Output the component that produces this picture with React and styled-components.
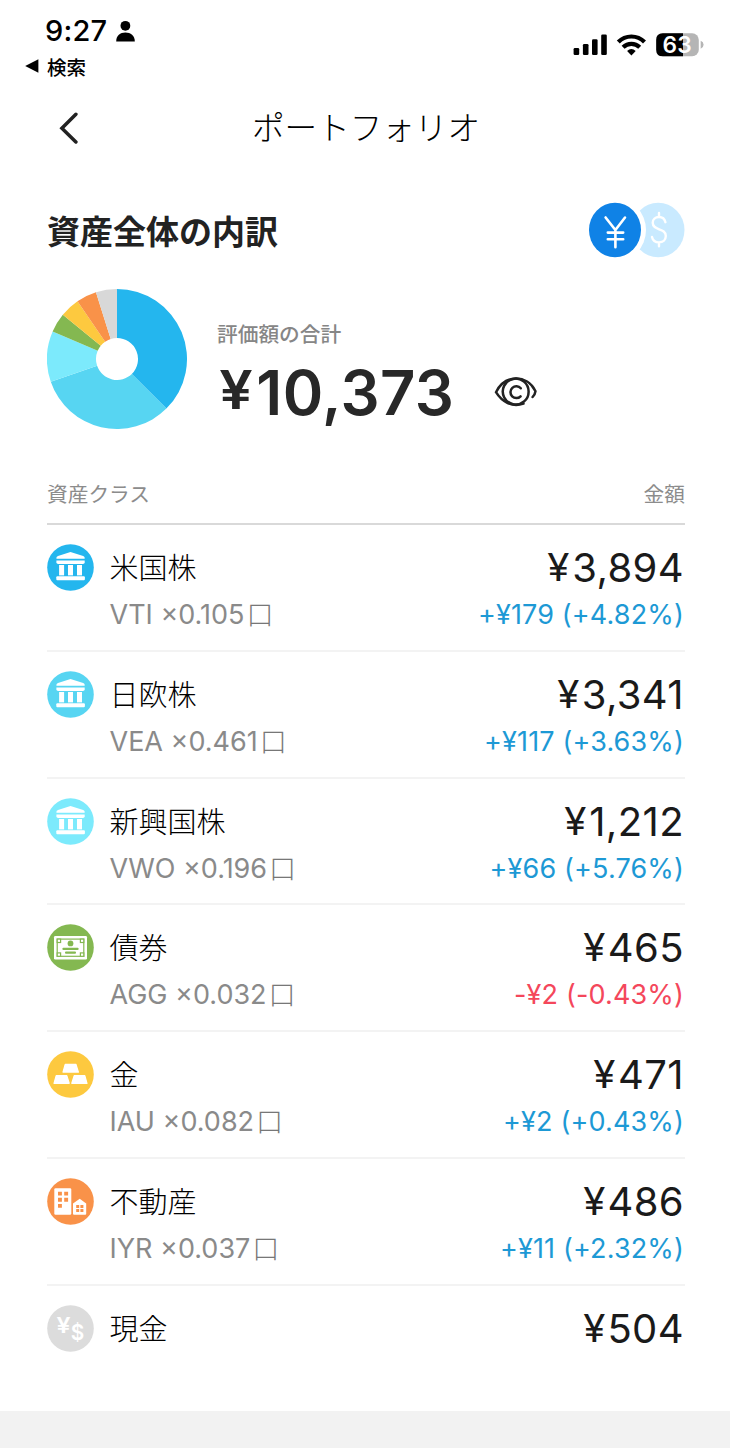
import styled, { createGlobalStyle } from 'styled-components';

const latin = `Inter, 'Noto Sans CJK JP', sans-serif`;
const japanese = `'Noto Sans CJK JP', sans-serif`;

const assets = [
  { name: '米国株', sub: 'VTI ×0.105', amount: 3894, diff: '+¥179 (+4.82%)', color: '#24b6ee', icon: 'bank' },
  { name: '日欧株', sub: 'VEA ×0.461', amount: 3341, diff: '+¥117 (+3.63%)', color: '#57d5f2', icon: 'bank' },
  { name: '新興国株', sub: 'VWO ×0.196', amount: 1212, diff: '+¥66 (+5.76%)', color: '#7ceafc', icon: 'bank' },
  { name: '債券', sub: 'AGG ×0.032', amount: 465, diff: '-¥2 (-0.43%)', color: '#84b851', icon: 'bond' },
  { name: '金', sub: 'IAU ×0.082', amount: 471, diff: '+¥2 (+0.43%)', color: '#fdc93f', icon: 'gold' },
  { name: '不動産', sub: 'IYR ×0.037', amount: 486, diff: '+¥11 (+2.32%)', color: '#f99249', icon: 'estate' },
  { name: '現金', amount: 504, color: '#dcdcdc', icon: 'cash' },
];

const total = assets.reduce((sum, a) => sum + a.amount, 0);

// Point on a circle, angle counted clockwise from the top
const point = (r, ratio) => {
  const a = ratio * Math.PI * 2;
  return `${70 + r * Math.sin(a)} ${70 - r * Math.cos(a)}`;
};

const Donut = () => {
  let start = 0;
  return (
    <Chart viewBox="0 0 140 140">
      {assets.map((a) => {
        const from = start;
        const to = start + a.amount / total;
        start = to;
        return (
          <path
            key={a.name}
            fill={a.icon === 'cash' ? '#d8d8d8' : a.color}
            d={`M${point(21, from)} L${point(70, from)} A70 70 0 0 1 ${point(70, to)} L${point(21, to)} A21 21 0 0 0 ${point(21, from)}Z`}
          />
        );
      })}
    </Chart>
  );
};

const Glyph = ({ type, color }) => (
  <RowIcon viewBox="0 0 47 47">
    <circle cx="23.5" cy="23.5" r="23.3" fill={color} />
    {type === 'bank' && (
      <g fill="#fff">
        <path d="M9.4 14.8Q9 12.6 11 12L23.5 8L36.2 12Q38.1 12.6 37.7 14.8Z" />
        <path d="M9.4 16.6h28.3v1.7q0 1.8-1.8 1.8H11.2q-1.8 0-1.8-1.8Z" />
        <rect x="12.1" y="21" width="5" height="10.4" />
        <rect x="21" y="21" width="5" height="10.4" />
        <rect x="30" y="21" width="5" height="10.4" />
        <rect x="9.3" y="32.2" width="28.6" height="4" rx="1" />
      </g>
    )}
    {type === 'bond' && (
      <>
        <rect x="7" y="12" width="33" height="23.4" rx="1.2" fill="#fff" />
        <rect x="9.6" y="14.5" width="27.8" height="18.4" fill={color} />
        <rect x="10.8" y="15.7" width="25.4" height="16" fill="#fff" />
        <g fill="#fff" stroke={color} strokeWidth="1.2">
          <rect x="10.2" y="15.1" width="3.4" height="3.4" />
          <rect x="33.4" y="15.1" width="3.4" height="3.4" />
          <rect x="10.2" y="28.9" width="3.4" height="3.4" />
          <rect x="33.4" y="28.9" width="3.4" height="3.4" />
        </g>
        <g fill={color}>
          <circle cx="23.5" cy="19.4" r="2.9" />
          <rect x="15.4" y="23.7" width="16.2" height="2.2" rx="1" />
          <rect x="18" y="27.6" width="11" height="2.2" rx="1" />
        </g>
      </>
    )}
    {type === 'gold' && (
      <g fill="#fff" stroke="#fff" strokeWidth="1.2" strokeLinejoin="round">
        <path d="M18.2 13.3h10.7l2.5 7.8H16z" />
        <path d="M9.2 24.6h10.6l2.4 7.7H7z" />
        <path d="M27.2 24.6h10.6l2.2 7.7H24.8z" />
      </g>
    )}
    {type === 'estate' && (
      <>
        <rect x="7.3" y="10.2" width="17" height="26.5" rx="1.3" fill="#fff" />
        <path d="M26 25.4L32.7 20.7L39.2 25.4V35.8q0 1-1 1H27q-1 0-1-1Z" fill="#fff" />
        <g fill={color}>
          <path d="M11 13.7h3.9v3.9H11zM17.2 13.7h3.9v3.9h-3.9zM11 19.8h3.9v3.9H11zM17.2 19.8h3.9v3.9h-3.9zM11 25.9h3.9v3.9H11z" />
          <path d="M29.2 27h3v2.9h-3zM33.4 27h3v2.9h-3zM29.2 31.1h3V34h-3zM33.4 31.1h3V34h-3z" />
        </g>
      </>
    )}
    {type === 'cash' && (
      <g fill="#fff" fontFamily="Inter, sans-serif" fontWeight="600">
        <text x="9.5" y="27.6" fontSize="22" textLength="14" lengthAdjust="spacingAndGlyphs">¥</text>
        <text x="23.8" y="34.7" fontSize="22" textLength="13.5" lengthAdjust="spacingAndGlyphs">$</text>
      </g>
    )}
  </RowIcon>
);

const StatusIcons = () => (
  <svg width="132" height="32" viewBox="0 -4 132 32">
    <g>
      <rect x="0.6" y="15" width="5.6" height="7" rx="1.3" />
      <rect x="9.9" y="11" width="5.6" height="11" rx="1.3" />
      <rect x="19" y="6.2" width="5.6" height="15.8" rx="1.3" />
      <rect x="28.2" y="1.5" width="5.6" height="20.5" rx="1.3" />
    </g>
    <g fill="none" stroke="#000" strokeWidth="4.2">
      <path d="M45.3 8.9C52.5 1.7 64.3 1.7 71.5 8.9" />
      <path d="M50.1 14.3C54.8 9.7 62 9.7 66.7 14.3" />
    </g>
    <path d="M58.4 22.4L54.1 18Q58.4 14.2 62.7 18Z" />
    <rect x="83.2" y="0.3" width="42.6" height="23" rx="6.6" fill="#b5b5b5" />
    <path d="M110 .3H89.8Q83.2 .3 83.2 6.9V16.7Q83.2 23.3 89.8 23.3H110Z" />
    <path d="M127.7 7.8Q130.6 9 130.6 11.8T127.7 15.8Z" fill="#b5b5b5" />
    <text x="89.6" y="20" fill="#fff" fontFamily="Inter, sans-serif" fontWeight="600" fontSize="23" textLength="29" lengthAdjust="spacingAndGlyphs">63</text>
  </svg>
);

const EyeIcon = () => (
  <Eye viewBox="0 0 44 32">
    <path d="M29.5 27.6C18 31.5 8 26 2 16.2C11-1.8 33-1.8 41.5 15.2C41.3 17.3 40.3 19.2 38.6 21" />
    <path d="M30 25.4A12.9 12.9 0 1 1 34.6 15.9C34.6 19.7 32.8 23.2 30 25.4" />
    <path d="M26.6 20.3A5.9 5.9 0 1 1 26.8 12.3" />
  </Eye>
);

const CurrencySwitch = () => (
  <svg width="97" height="56" viewBox="0 0 97 56">
    <ellipse cx="70.2" cy="28" rx="26.3" ry="27.2" fill="#c9eaff" />
    <ellipse cx="27" cy="28" rx="31" ry="32" fill="#fff" />
    <ellipse cx="27" cy="28" rx="26" ry="27.2" fill="#0f82e6" />
    <g fill="none" stroke="#fff" strokeWidth="2.6" strokeLinecap="round" strokeLinejoin="round">
      <path d="M17.6 15.5L27.4 28L37 15.5M27.4 28V45.2M19.8 30.6H35.2M19.8 37.3H35.2" />
      <path d="M71 11V14.8M71 40.5V44.3M77.4 20.2C76.7 17 74.2 15 71 15C67.4 15 64.7 17.5 64.7 20.8C64.7 29 77.8 25.5 77.8 34C77.8 37.8 75 40.4 71 40.4C67.2 40.4 64.7 38.2 64 35" strokeWidth="2.4" />
    </g>
  </svg>
);

const App = () => (
  <>
    <GlobalStyle />
    <Screen>
      <StatusBar>
        <div>
          <Clock>
            9:27
            <svg width="20" height="22" viewBox="0 0 20 22">
              <circle cx="9.4" cy="5.8" r="4.9" />
              <path d="M.2 21.6C.2 15.4 4.2 12.6 9.4 12.6S18.8 15.4 18.8 21.6Z" />
            </svg>
          </Clock>
          <BackTo>
            <svg width="14" height="14" viewBox="0 0 14 14">
              <path d="M.2 7L13.4 .3V13.7Z" />
            </svg>
            検索
          </BackTo>
        </div>
        <Signals>
          <StatusIcons />
        </Signals>
      </StatusBar>

      <NavBar>
        <svg width="20" height="32" viewBox="0 0 20 32" fill="none" stroke="#222" strokeWidth="3.5" strokeLinecap="round">
          <path d="M16.9 2.3L2.9 16.2L16.9 30" />
        </svg>
        <Title>ポートフォリオ</Title>
      </NavBar>

      <Content>
        <SectionHead>
          <Heading>資産全体の内訳</Heading>
          <CurrencySwitch />
        </SectionHead>

        <Summary>
          <Donut />
          <div>
            <Label>評価額の合計</Label>
            <TotalRow>
              <Total>
                <BigYen>¥</BigYen>
                {total.toLocaleString('en-US')}
              </Total>
              <EyeIcon />
            </TotalRow>
          </div>
        </Summary>

        <TableHead>
          <span>資産クラス</span>
          <span>金額</span>
        </TableHead>

        {assets.map((a) => (
          <Row key={a.name}>
            <Glyph type={a.icon} color={a.color} />
            <Info>
              <Name>{a.name}</Name>
              {a.sub && (
                <Units>
                  {a.sub}
                  <Kuchi>口</Kuchi>
                </Units>
              )}
            </Info>
            <Values>
              <Amount>
                <Yen>¥</Yen>
                {a.amount.toLocaleString('en-US')}
              </Amount>
              {a.diff && <Diff $down={a.diff.startsWith('-')}>{a.diff}</Diff>}
            </Values>
          </Row>
        ))}
      </Content>
      <Footer />
    </Screen>
  </>
);

const GlobalStyle = createGlobalStyle`
  body {
    margin: 0;
    background: #fff;
  }
  * {
    box-sizing: border-box;
  }
  svg {
    display: block;
    flex-shrink: 0;
  }
`;

const Screen = styled.div`
  width: 732px;
  height: 1448px;
  display: flex;
  flex-direction: column;
  overflow: hidden;
  font-family: ${latin};
  color: #222;
  white-space: nowrap;
`;

const StatusBar = styled.header`
  height: 96px;
  padding: 13px 27px 0 25px;
  display: flex;
  justify-content: space-between;
  color: #000;
`;

const Clock = styled.div`
  height: 35px;
  padding-left: 20px;
  display: flex;
  align-items: center;
  gap: 9px;
  font-size: 29px;
  font-weight: 500;
  letter-spacing: 0.2px;
`;

const BackTo = styled.div`
  height: 36px;
  display: flex;
  align-items: center;
  gap: 8px;
  font-family: ${japanese};
  font-size: 19.5px;
  font-weight: 500;
`;

const Signals = styled.div`
  padding-top: 16px;
`;

const NavBar = styled.nav`
  height: 64px;
  padding: 0 59px;
  display: grid;
  grid-template-columns: 20px 1fr 20px;
  align-items: center;
`;

const Title = styled.h1`
  margin: 0;
  padding-bottom: 4px;
  text-align: center;
  font-family: ${japanese};
  font-size: 32.6px;
  font-weight: 300;
  line-height: 60px;
  color: #000;
`;

const Content = styled.main`
  height: 1251px;
  flex-shrink: 0;
  padding: 0 47px;
`;

const SectionHead = styled.div`
  height: 128px;
  padding-top: 12px;
  display: flex;
  align-items: center;
  justify-content: space-between;
`;

const Heading = styled.h2`
  margin: 0;
  padding-bottom: 1px;
  font-family: ${japanese};
  font-size: 33px;
  font-weight: 700;
`;

const Summary = styled.section`
  height: 142px;
  display: flex;
  gap: 30px;
`;

const Chart = styled.svg`
  width: 140px;
  height: 140px;
  margin-top: 1px;
`;

const Label = styled.div`
  height: 30px;
  margin-top: 30px;
  font-family: ${japanese};
  font-size: 20.7px;
  font-weight: 500;
  line-height: 30px;
  color: #868686;
`;

const TotalRow = styled.div`
  height: 88px;
  display: flex;
  align-items: center;
  gap: 37px;
`;

const Total = styled.div`
  width: 240px;
  padding: 2px 0 0 4px;
  font-size: 61.5px;
  font-weight: 600;
  line-height: 86px;
  letter-spacing: 0.4px;
  color: #282828;
`;

const BigYen = styled.span`
  display: inline-block;
  margin-right: 5px;
  font-size: 53px;
  line-height: 0;
  vertical-align: 6px;
  transform: scaleX(1.12);
`;

const Eye = styled.svg`
  width: 44px;
  height: 32px;
  fill: none;
  stroke: #222;
  stroke-width: 2.5;
  stroke-linecap: round;
`;

const TableHead = styled.div`
  height: 95px;
  padding-top: 48px;
  display: flex;
  justify-content: space-between;
  border-bottom: 2px solid #d9d9d9;
  font-family: ${japanese};
  font-size: 20.7px;
  font-weight: 400;
  color: #8c8c8c;
`;

const Row = styled.div`
  height: 126.8px;
  padding-top: 19px;
  display: flex;
  border-bottom: 2px solid #f3f3f3;

  &:last-child {
    border: none;
  }
`;

const RowIcon = styled.svg`
  width: 47px;
  height: 47px;
`;

const Info = styled.div`
  flex: 1;
  padding-left: 15.5px;
`;

const Name = styled.div`
  height: 48px;
  font-family: ${japanese};
  font-size: 29px;
  font-weight: 300;
  line-height: 45px;
  color: #000;
`;

const Units = styled.div`
  height: 46px;
  display: flex;
  font-size: 27px;
  font-weight: 400;
  line-height: 46px;
  color: #8a8a8a;
`;

const Kuchi = styled.span`
  margin-left: 2px;
  font-family: ${japanese};
  font-weight: 300;
  line-height: 43px;
  color: #777;
`;

const Values = styled.div`
  padding-right: 1px;
  text-align: right;
`;

const Amount = styled.div`
  height: 48px;
  font-size: 40px;
  font-weight: 400;
  line-height: 48px;
  letter-spacing: 0.4px;
  color: #1a1a1a;
`;

const Yen = styled.span`
  display: inline-block;
  margin-right: 2.5px;
  font-size: 38px;
  line-height: 0;
  vertical-align: 1px;
  transform: scaleX(1.06);
`;

const Diff = styled.div`
  height: 46px;
  font-size: 27px;
  font-weight: 400;
  line-height: 46px;
  letter-spacing: 0.15px;
  color: ${(props) => (props.$down ? '#f4475b' : '#1d99d5')};
`;

const Footer = styled.footer`
  flex: 1;
  width: 730px;
  background: #f2f2f2;
`;

export default App;
